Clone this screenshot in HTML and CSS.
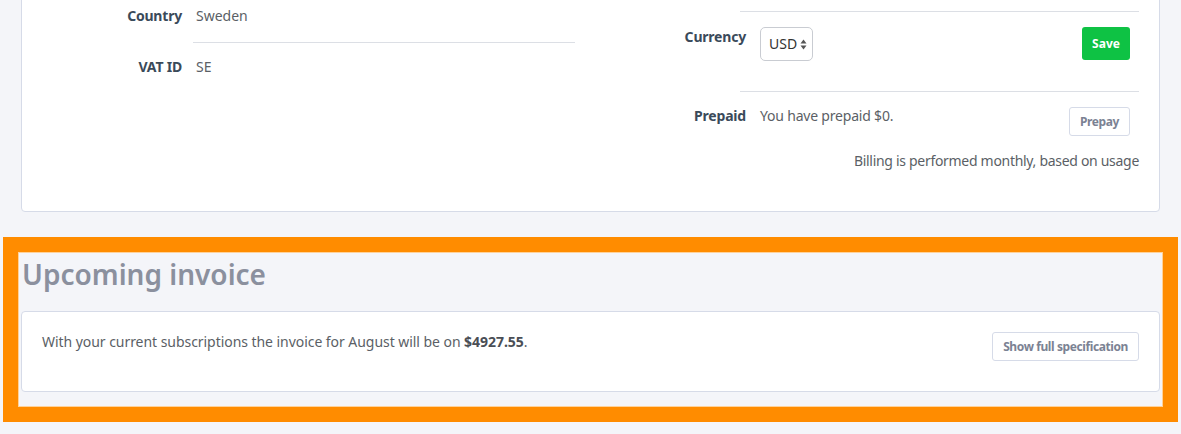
FILE: index.html
```html
<!DOCTYPE html>
<html lang="en">
<head>
  <meta charset="UTF-8" />
  <meta name="viewport" content="width=device-width, initial-scale=1.0" />
  <title>Billing</title>
  <link rel="stylesheet" href="styles.css">
</head>
<body>

  <div class="page">
    <div class="card details">
      <div class="col left-col">
        <div class="row first">
          <div class="label">Country</div>
          <div class="value">Sweden</div>
        </div>
        <div class="sep left-sep"></div>
        <div class="row second">
          <div class="label">VAT ID</div>
          <div class="value">SE</div>
        </div>
      </div>

      <div class="col right-col">
        <div class="sep right-sep top-sep"></div>
        <div class="row currency-row">
          <div class="label">Currency</div>
          <div class="field">
            <div class="select">USD
              <svg width="7" height="11" viewBox="0 0 7 11"><path d="M3.5 0.5 L6.5 4.5 L0.5 4.5 Z M3.5 10.5 L6.5 6.5 L0.5 6.5 Z" fill="#555"/></svg>
            </div>
            <button class="btn btn-green">Save</button>
          </div>
        </div>
        <div class="sep right-sep"></div>
        <div class="row prepaid-row">
          <div class="label">Prepaid</div>
          <div class="field">
            <span class="value">You have prepaid $0.</span>
            <button class="btn btn-light prepay">Prepay</button>
          </div>
        </div>
        <p class="note">Billing is performed monthly, based on usage</p>
      </div>
    </div>
  </div>

  <section class="highlight">
    <h2>Upcoming invoice</h2>
    <div class="card invoice">
      <p>With your current subscriptions the invoice for August will be on <strong>$4927.55</strong>.</p>
      <button class="btn btn-light spec">Show full specification</button>
    </div>
  </section>

</body>
</html>
```

FILE: styles.css
```css
body {
  font-family: "Noto Sans", sans-serif;
  font-size: 14px;
  line-height: 20px;
  background: #f4f5f9;
  color: #5b5f66;
  margin: 0;
}
.page {
  padding: 0 21px;
}
.card {
  background: white;
  border: 1px solid #d6dbe8;
  border-radius: 4px;
}
.details {
  display: flex;
  margin-top: -21px;
  padding: 20px 20px 40px 19px;
}
.col {
  display: flex;
  flex-direction: column;
}
.left-col {
  width: 534px;
}
.right-col {
  flex: 1;
  margin-left: 25px;
}
.row {
  display: flex;
  align-items: flex-start;
}
.label {
  width: 141px;
  text-align: right;
  font-weight: bold;
  color: #3a4a5a;
  letter-spacing: -0.2px;
  flex-shrink: 0;
}
.right-col .label {
  width: 146px;
}
.value {
  margin-left: 14px;
  color: #5b5f66;
}
.sep {
  height: 1px;
  background: #dcdfe5;
}
.left-sep {
  margin: 16px 0 0 152px;
}
.row.first {
  margin-top: 6px;
}
.row.second {
  margin-top: 14px;
}
.right-sep {
  margin-left: 140px;
}
.top-sep {
  margin-top: 11px;
}
.field {
  flex: 1;
  display: flex;
  align-items: flex-start;
  justify-content: space-between;
  margin-left: 14px;
  padding-right: 9px;
}
.field .value {
  margin-left: 0;
  letter-spacing: -0.2px;
}
.currency-row {
  padding: 15px 0 30px;
}
.prepaid-row {
  padding-top: 14px;
}
.select {
  display: flex;
  align-items: center;
  gap: 3px;
  height: 32px;
  padding: 0 5px 0 8px;
  border: 1px solid #c9ccd2;
  border-radius: 5px;
  color: #333;
}
.btn {
  font-family: inherit;
  font-size: 12px;
  font-weight: bold;
  border-radius: 3px;
  cursor: pointer;
}
.btn-green {
  background: #0ec244;
  color: white;
  border: none;
  width: 48px;
  height: 33px;
}
.btn-light {
  background: white;
  color: #7b8293;
  border: 1px solid #d6dbe8;
  height: 29px;
  padding: 0 10px;
  letter-spacing: -0.4px;
}
.prepay {
  margin-top: 1px;
}
.note {
  margin: 15px 0 0;
  text-align: right;
  letter-spacing: -0.3px;
}
.highlight {
  margin: 25px 3px 0;
  padding: 0 3px 15px;
  border: 15px solid #ff8c00;
  box-shadow: inset 0 0 0 1px #ffd29a;
}
.highlight h2 {
  margin: 5px 0 20px 1px;
  font-size: 28px;
  line-height: 34px;
  font-weight: 600;
  color: #8b909e;
}
.invoice {
  display: flex;
  justify-content: space-between;
  align-items: flex-start;
  padding: 20px 20px 30px;
}
.invoice p {
  margin: 0;
  letter-spacing: -0.05px;
}
.invoice strong {
  color: #4a4e55;
}
```
